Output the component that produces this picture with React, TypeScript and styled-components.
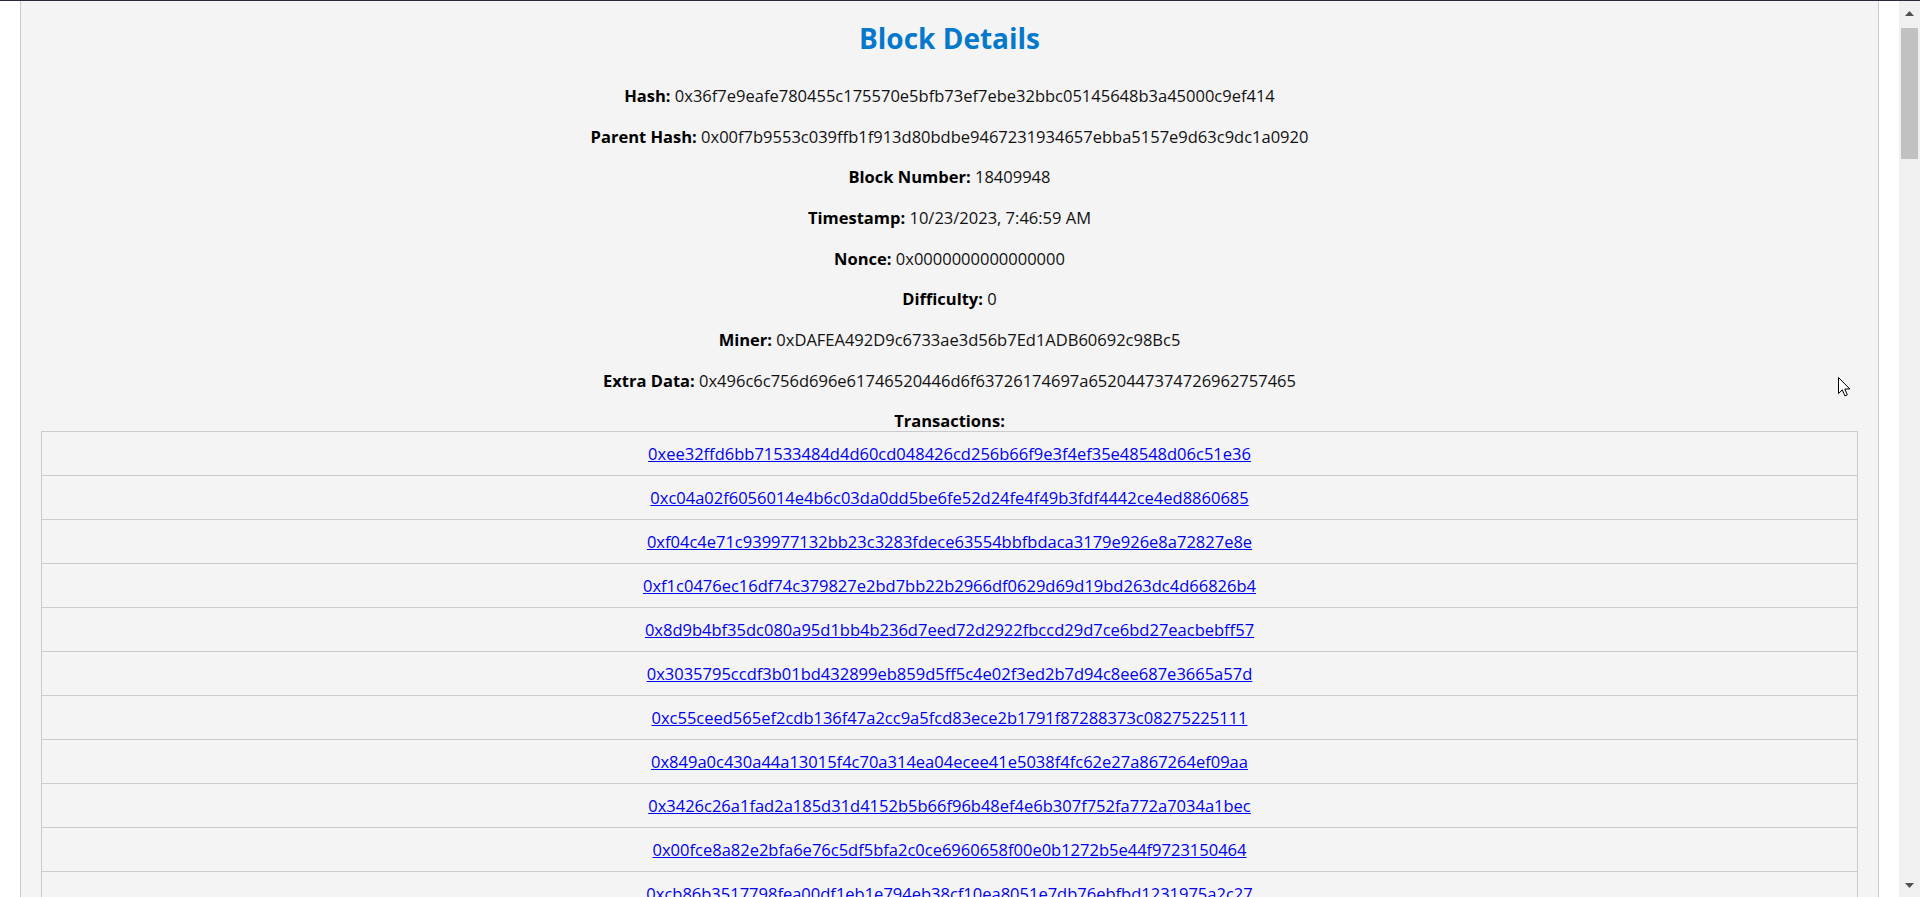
import React from "react";
import styled, { createGlobalStyle } from "styled-components";

const GlobalStyle = createGlobalStyle`
  html, body {
    margin: 0;
    padding: 0;
    overflow: hidden;
    background: #ffffff;
    font-family: "Open Sans", "Noto Sans", sans-serif;
    color: #111111;
  }
  * { box-sizing: border-box; }
`;

const Shell = styled.div`
  display: flex;
  flex-direction: column;
  height: 100vh;
  position: relative;
`;

const TopRule = styled.div`
  height: 1px;
  flex: none;
  background: #272a37;
`;

const Viewport = styled.div`
  display: flex;
  flex: 1;
  min-height: 0;
`;

const Main = styled.main`
  flex: 1;
  min-width: 0;
  overflow: hidden;
`;

const Container = styled.div`
  margin: 0 20px;
  padding: 19px 20px 40px;
  background: #f4f4f4;
  border-left: 1px solid #cbcbcb;
  border-right: 1px solid #cbcbcb;
  text-align: center;
`;

const Title = styled.h1`
  margin: 0 0 28px;
  font-size: 28px;
  line-height: 36px;
  font-weight: 700;
  color: #0479cc;
`;

const InfoLine = styled.p<{ $tight?: boolean }>`
  margin: 17.7px 0 ${(p) => (p.$tight ? "0" : "17.7px")};
  font-size: 16.5px;
  line-height: ${(p) => (p.$tight ? "21px" : "23px")};
  color: #111111;
`;

const Label = styled.strong`
  font-weight: 700;
  color: #000000;
`;

const TxList = styled.div`
  border: 1px solid #cbcbcb;
  border-bottom: none;
`;

const TxRow = styled.div`
  padding: 10px;
  border-bottom: 1px solid #cbcbcb;
  font-size: 16.5px;
  line-height: 23px;
`;

const TxLink = styled.a`
  color: #0000ee;
  text-decoration: underline;
`;

const ScrollTrack = styled.aside`
  width: 21px;
  flex: none;
  background: #f0f0f0;
  display: flex;
  flex-direction: column;
  align-items: center;
`;

const ScrollArrow = styled.div`
  height: 24px;
  width: 100%;
  display: flex;
  align-items: center;
  justify-content: center;
  flex: none;
`;

const ScrollThumb = styled.div`
  margin-top: 3px;
  width: 17px;
  height: 131px;
  background: #c1c1c1;
  flex: none;
`;

const ScrollSpacer = styled.div`
  flex: 1;
`;

const Cursor = styled.svg`
  position: absolute;
  left: 1838px;
  top: 377px;
  pointer-events: none;
`;

const details: [string, string][] = [
  ["Hash", "0x36f7e9eafe780455c175570e5bfb73ef7ebe32bbc05145648b3a45000c9ef414"],
  ["Parent Hash", "0x00f7b9553c039ffb1f913d80bdbe9467231934657ebba5157e9d63c9dc1a0920"],
  ["Block Number", "18409948"],
  ["Timestamp", "10/23/2023, 7:46:59 AM"],
  ["Nonce", "0x0000000000000000"],
  ["Difficulty", "0"],
  ["Miner", "0xDAFEA492D9c6733ae3d56b7Ed1ADB60692c98Bc5"],
  ["Extra Data", "0x496c6c756d696e61746520446d6f63726174697a6520447374726962757465"],
];

const transactions = [
  "0xee32ffd6bb71533484d4d60cd048426cd256b66f9e3f4ef35e48548d06c51e36",
  "0xc04a02f6056014e4b6c03da0dd5be6fe52d24fe4f49b3fdf4442ce4ed8860685",
  "0xf04c4e71c939977132bb23c3283fdece63554bbfbdaca3179e926e8a72827e8e",
  "0xf1c0476ec16df74c379827e2bd7bb22b2966df0629d69d19bd263dc4d66826b4",
  "0x8d9b4bf35dc080a95d1bb4b236d7eed72d2922fbccd29d7ce6bd27eacbebff57",
  "0x3035795ccdf3b01bd432899eb859d5ff5c4e02f3ed2b7d94c8ee687e3665a57d",
  "0xc55ceed565ef2cdb136f47a2cc9a5fcd83ece2b1791f87288373c08275225111",
  "0x849a0c430a44a13015f4c70a314ea04ecee41e5038f4fc62e27a867264ef09aa",
  "0x3426c26a1fad2a185d31d4152b5b66f96b48ef4e6b307f752fa772a7034a1bec",
  "0x00fce8a82e2bfa6e76c5df5bfa2c0ce6960658f00e0b1272b5e44f9723150464",
  "0xcb86b3517798fea00df1eb1e794eb38cf10ea8051e7db76ebfbd1231975a2c27",
  "0x5a1e7c0f3b29d84e6c71a0b5f2d93e48c7a61b05d2f84e93c6a07b1d5e2f3a94",
  "0x91d4b2e7a03c58f16e29b7d40a5c83f1e62b9d07c4a15e83f2d6b09a7c1e4f58",
];

export default function App() {
  return (
    <>
      <GlobalStyle />
      <Shell>
        <TopRule />
        <Viewport>
          <Main>
            <Container>
              <Title>Block Details</Title>
              {details.map(([label, value]) => (
                <InfoLine key={label}>
                  <Label>{label}:</Label> {value}
                </InfoLine>
              ))}
              <InfoLine $tight>
                <Label>Transactions:</Label>
              </InfoLine>
              <TxList>
                {transactions.map((tx) => (
                  <TxRow key={tx}>
                    <TxLink href="#">{tx}</TxLink>
                  </TxRow>
                ))}
              </TxList>
            </Container>
          </Main>
          <ScrollTrack>
            <ScrollArrow>
              <svg width="9" height="5" viewBox="0 0 9 5">
                <path d="M4.5 0 L9 5 L0 5 Z" fill="#505050" />
              </svg>
            </ScrollArrow>
            <ScrollThumb />
            <ScrollSpacer />
            <ScrollArrow>
              <svg width="9" height="5" viewBox="0 0 9 5">
                <path d="M0 0 L9 0 L4.5 5 Z" fill="#505050" />
              </svg>
            </ScrollArrow>
          </ScrollTrack>
        </Viewport>
        <Cursor width="14" height="21" viewBox="0 0 14 21">
          <path
            d="M0.5 0.5 L0.5 16.5 L4.3 12.8 L6.9 18.9 L9.3 17.9 L6.8 12 L11.8 12 Z"
            fill="#ffffff"
            stroke="#000000"
            strokeWidth="1"
            strokeLinejoin="round"
          />
        </Cursor>
      </Shell>
    </>
  );
}
